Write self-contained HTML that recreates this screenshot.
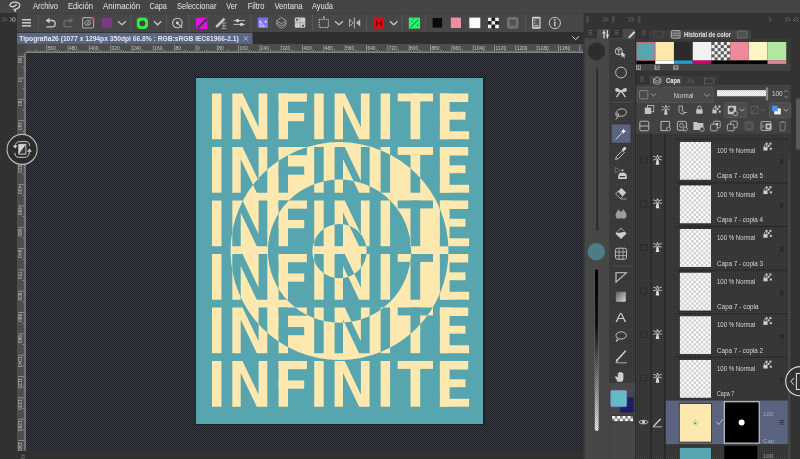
<!DOCTYPE html><html><head><meta charset="utf-8"><style>html,body{margin:0;padding:0;background:#2f2f2f;overflow:hidden;width:800px;height:459px}svg{display:block;will-change:transform}text{font-family:"Liberation Sans",sans-serif}</style></head><body>
<svg width="800" height="459" viewBox="0 0 800 459">
<defs>
<pattern id="chk" width="2" height="2" patternUnits="userSpaceOnUse"><rect width="2" height="2" fill="#393937"/><rect width="1" height="1" fill="#202229"/><rect x="1" y="1" width="1" height="1" fill="#202229"/></pattern>
<pattern id="dots" width="2" height="2" patternUnits="userSpaceOnUse"><rect width="2" height="2" fill="#343434"/><rect width="1" height="1" fill="#404040"/></pattern>
<pattern id="tchk" width="4.8" height="4.8" patternUnits="userSpaceOnUse"><rect width="4.8" height="4.8" fill="#ffffff"/><rect width="2.4" height="2.4" fill="#cdcdcd"/><rect x="2.4" y="2.4" width="2.4" height="2.4" fill="#cdcdcd"/></pattern>
<pattern id="dots2" width="2" height="2" patternUnits="userSpaceOnUse"><rect width="2" height="2" fill="#373737"/><rect width="1" height="1" fill="#414141"/></pattern>
<pattern id="dots3" width="2" height="2" patternUnits="userSpaceOnUse"><rect width="2" height="2" fill="#2a2a2a"/><rect width="1" height="1" fill="#363636"/></pattern>
</defs>
<rect width="800" height="459" fill="#303030"/>
<rect x="0" y="0" width="800" height="13" fill="#454545"/>
<text x="32.9" y="9.2" font-size="9.2" fill="#e6e6e6" textLength="25.1" lengthAdjust="spacingAndGlyphs">Archivo</text>
<text x="68" y="9.2" font-size="9.2" fill="#e6e6e6" textLength="25.0" lengthAdjust="spacingAndGlyphs">Edición</text>
<text x="103" y="9.2" font-size="9.2" fill="#e6e6e6" textLength="37.2" lengthAdjust="spacingAndGlyphs">Animación</text>
<text x="149.4" y="9.2" font-size="9.2" fill="#e6e6e6" textLength="17.4" lengthAdjust="spacingAndGlyphs">Capa</text>
<text x="177" y="9.2" font-size="9.2" fill="#e6e6e6" textLength="39.4" lengthAdjust="spacingAndGlyphs">Seleccionar</text>
<text x="226.3" y="9.2" font-size="9.2" fill="#e6e6e6" textLength="10.9" lengthAdjust="spacingAndGlyphs">Ver</text>
<text x="247.7" y="9.2" font-size="9.2" fill="#e6e6e6" textLength="16.8" lengthAdjust="spacingAndGlyphs">Filtro</text>
<text x="274.4" y="9.2" font-size="9.2" fill="#e6e6e6" textLength="28.0" lengthAdjust="spacingAndGlyphs">Ventana</text>
<text x="312" y="9.2" font-size="9.2" fill="#e6e6e6" textLength="21.0" lengthAdjust="spacingAndGlyphs">Ayuda</text>
<path d="M15.6 11.3 L14 9.5 C17 9.4 20 7.5 19.8 5 C19.6 2.6 16.5 1.8 14 2.2 C11.2 2.6 9.6 4.2 10 5.6 C10.4 7 12.6 7 14.5 6.2 C15.6 5.7 16.6 5 16 4.4" fill="none" stroke="#d2d2d2" stroke-width="1.3" stroke-linecap="round" stroke-linejoin="round"/>
<rect x="0" y="13" width="17" height="446" fill="#313131"/>
<path d="M2.2 17.4 l2 2.1 l-2 2.1 M4.9 17.4 l2 2.1 l-2 2.1" fill="none" stroke="#7a7a7a" stroke-width="0.8"/>
<path d="M10 17.4 l2 2.1 l-2 2.1" fill="none" stroke="#b0b0b0" stroke-width="0.8"/><ellipse cx="13.8" cy="19.5" rx="1.5" ry="2" fill="none" stroke="#b0b0b0" stroke-width="0.8"/>
<rect x="17" y="13" width="567" height="19.2" fill="#474747"/>
<line x1="0" y1="13.6" x2="800" y2="13.6" stroke="#353535" stroke-width="0.9" stroke-dasharray="1 1.4"/>
<g fill="none" stroke="#d6d6d6" stroke-width="1.4"><line x1="22" y1="19.75" x2="31" y2="19.75"/><line x1="22" y1="22.8" x2="31" y2="22.8"/><line x1="22" y1="25.85" x2="31" y2="25.85"/></g>
<line x1="38.3" y1="14.7" x2="38.3" y2="30.8" stroke="#565a62" stroke-width="0.9"/>
<line x1="130.9" y1="14.7" x2="130.9" y2="30.8" stroke="#565a62" stroke-width="0.9"/>
<line x1="166.5" y1="14.7" x2="166.5" y2="30.8" stroke="#565a62" stroke-width="0.9"/>
<line x1="188.8" y1="14.7" x2="188.8" y2="30.8" stroke="#565a62" stroke-width="0.9"/>
<line x1="250.7" y1="14.7" x2="250.7" y2="30.8" stroke="#565a62" stroke-width="0.9"/>
<line x1="312.7" y1="14.7" x2="312.7" y2="30.8" stroke="#565a62" stroke-width="0.9"/>
<line x1="366.5" y1="14.7" x2="366.5" y2="30.8" stroke="#565a62" stroke-width="0.9"/>
<line x1="402.2" y1="14.7" x2="402.2" y2="30.8" stroke="#565a62" stroke-width="0.9"/>
<line x1="425.4" y1="14.7" x2="425.4" y2="30.8" stroke="#565a62" stroke-width="0.9"/>
<line x1="525.6" y1="14.7" x2="525.6" y2="30.8" stroke="#565a62" stroke-width="0.9"/>
<path d="M48.5 20.5 H52 A3.2 3.2 0 0 1 52 26.9 H46.5" fill="none" stroke="#cacaca" stroke-width="1.3"/><polygon points="45.5,20.5 49.5,17.8 49.5,23.2" fill="#cacaca"/>
<path d="M70.5 20.5 H67 A3.2 3.2 0 0 0 67 26.9 H72.5" fill="none" stroke="#6e6e6e" stroke-width="1.3"/><polygon points="73.5,20.5 69.5,17.8 69.5,23.2" fill="#6e6e6e"/>
<rect x="82.6" y="17.6" width="11" height="10.4" rx="1.2" fill="none" stroke="#a8a8a8" stroke-width="1.1"/>
<path d="M90.8 20.8 C87.5 19.8 84.5 21.5 84.8 23.6 C85.1 25.6 89.5 25.7 90.6 23.8 C91.3 22.5 89.6 21.8 88.2 22.4 C87 22.9 87.3 24 88.6 24" fill="none" stroke="#bdbdbd" stroke-width="0.9"/>
<circle cx="92.6" cy="18.6" r="1.8" fill="#e8356a"/>
<rect x="101.8" y="17.7" width="10.4" height="10.2" fill="#7b3b82"/>
<polyline points="118,21.2 121.95,24.8 125.9,21.2" fill="none" stroke="#c8c8c8" stroke-width="1.2"/>
<rect x="136.8" y="17.6" width="11.2" height="11.4" fill="#33e84a"/><circle cx="142.4" cy="23.3" r="2.9" fill="#4a3a4a"/><path d="M136.8 17.6 l2.4 0 l-2.4 2.4z M148 17.6 l-2.4 0 l2.4 2.4z M136.8 29 l2.4 0 l-2.4 -2.4z M148 29 l-2.4 0 l2.4 -2.4z" fill="#3a4a3a"/>
<polyline points="154,21.2 157.65,24.8 161.3,21.2" fill="none" stroke="#c8c8c8" stroke-width="1.2"/>
<circle cx="177.4" cy="23" r="4.8" fill="none" stroke="#c4c4c4" stroke-width="1.1"/><rect x="176" y="21.6" width="2.6" height="2.6" fill="#d0d0d0"/><line x1="178" y1="23.6" x2="182.4" y2="27.8" stroke="#c4c4c4" stroke-width="1.1"/>
<rect x="196.1" y="17.8" width="11.2" height="11.2" fill="#e012e0"/><line x1="197.4" y1="28.4" x2="206.8" y2="19" stroke="#3a3a3a" stroke-width="2"/>
<path d="M215.6 27.6 L216 25.5 L223.6 17.8 L225.4 19.6 L217.8 27.3 Z" fill="#c8c8c8"/><path d="M221.5 23 h5 M221.5 25.8 h5 M221.5 28.6 h5 M223.8 22.8 v6" stroke="#b0b0b0" stroke-width="0.8" fill="none"/>
<g stroke="#c8c8c8" stroke-width="0.9"><line x1="233.5" y1="20.6" x2="245" y2="20.6"/><line x1="233.5" y1="24.4" x2="245" y2="24.4"/></g><circle cx="237.6" cy="20.6" r="1.6" fill="#d8d8d8"/><circle cx="241.6" cy="24.4" r="1.6" fill="#d8d8d8"/>
<rect x="257.8" y="17.6" width="10.2" height="10.5" rx="1" fill="#7a6ff0"/><path d="M260 20 v6.2 l5.5 0" fill="none" stroke="#d8e0ff" stroke-width="0.9"/><path d="M260.5 21 l3 4.8" stroke="#d8e0ff" stroke-width="0.9"/><circle cx="265.6" cy="21.8" r="1" fill="#e8e8ff"/>
<g fill="none" stroke="#a6a6a6" stroke-width="0.9"><path d="M276.8 20.6 L281.4 17.4 L286 20.6 L281.4 23.8 Z"/><path d="M276.8 22.9 L281.4 26.1 L286 22.9"/><path d="M276.8 25.2 L281.4 28.4 L286 25.2"/><path d="M276.8 20.6 v4.6 M286 20.6 v4.6"/></g>
<rect x="294.8" y="17.6" width="10.5" height="10.2" rx="1.2" fill="#cdcdcd"/><circle cx="297" cy="19.8" r="1" fill="#333"/><circle cx="303" cy="25.8" r="1" fill="#333"/><path d="M295 22.7 h10 M300 18 v10" stroke="#8a8a8a" stroke-width="0.6"/>
<rect x="319.2" y="19.4" width="9.2" height="8" fill="none" stroke="#cfcfcf" stroke-width="1" stroke-dasharray="1.3 0.9"/><rect x="323" y="16.6" width="1.6" height="1.6" fill="#cfcfcf"/>
<polyline points="335,21.2 339.0,24.8 343,21.2" fill="none" stroke="#c8c8c8" stroke-width="1.2"/>
<polygon points="349.5,19.2 353.3,22.8 349.5,26.4" fill="none" stroke="#bdbdbd" stroke-width="0.9"/><line x1="354.4" y1="17.4" x2="354.4" y2="28.4" stroke="#bdbdbd" stroke-width="0.9"/><polygon points="360.2,19.2 356,22.8 360.2,26.4" fill="#bdbdbd"/>
<rect x="373.8" y="17.8" width="10.2" height="10.9" fill="#dc0a16"/><path d="M376.6 20.6 v5.4 M381.2 20.6 v5.4 M376.6 23.3 h4.6" stroke="#6a0000" stroke-width="1.1"/>
<polyline points="390,21.2 393.75,24.8 397.5,21.2" fill="none" stroke="#c8c8c8" stroke-width="1.2"/>
<rect x="408.8" y="17.6" width="11.2" height="11" fill="#2ef070"/><line x1="410.5" y1="27.3" x2="418.5" y2="19.5" stroke="#1a5a2a" stroke-width="0.9"/><circle cx="412" cy="21.5" r="0.6" fill="#1a4a1a"/><circle cx="417.6" cy="25.2" r="0.6" fill="#1a4a1a"/><circle cx="413.5" cy="19" r="0.6" fill="#1a4a1a"/>
<rect x="432.2" y="17.6" width="10.3" height="10.5" rx="1" fill="#0a0a0a" stroke="#555" stroke-width="0.6"/>
<rect x="450.8" y="17.6" width="10.2" height="10.5" rx="0.6" fill="#ec8ea0"/>
<circle cx="453" cy="20" r="0.45" fill="#f5e08a"/><circle cx="458" cy="19.5" r="0.45" fill="#f5e08a"/><circle cx="455.6" cy="23" r="0.45" fill="#f5e08a"/><circle cx="453.5" cy="26" r="0.45" fill="#f5e08a"/><circle cx="459" cy="25.5" r="0.45" fill="#f5e08a"/>
<rect x="469.3" y="17.6" width="11" height="10.5" fill="#fafafa"/>
<g><rect x="488.00" y="17.70" width="3.6" height="3.5" fill="#f0f0f0"/><rect x="491.60" y="17.70" width="3.6" height="3.5" fill="#1e1e1e"/><rect x="495.20" y="17.70" width="3.6" height="3.5" fill="#f0f0f0"/><rect x="488.00" y="21.20" width="3.6" height="3.5" fill="#1e1e1e"/><rect x="491.60" y="21.20" width="3.6" height="3.5" fill="#f0f0f0"/><rect x="495.20" y="21.20" width="3.6" height="3.5" fill="#1e1e1e"/><rect x="488.00" y="24.70" width="3.6" height="3.5" fill="#f0f0f0"/><rect x="491.60" y="24.70" width="3.6" height="3.5" fill="#1e1e1e"/><rect x="495.20" y="24.70" width="3.6" height="3.5" fill="#f0f0f0"/></g>
<rect x="507.8" y="17.8" width="10" height="10.2" rx="1.2" fill="#6a6a6a" stroke="#8c8c8c" stroke-width="0.8"/><rect x="510" y="20" width="5.6" height="5.2" fill="#505050"/>
<rect x="532" y="16.8" width="8.6" height="12" rx="1.2" fill="#d0d0d0"/><rect x="533.2" y="18.6" width="6.2" height="8.2" fill="#5a5a5a"/><path d="M534 20.5 h1.5 M534 23 h1.5 M534 25.5 h4.5" stroke="#d0d0d0" stroke-width="0.8"/>
<circle cx="554.8" cy="23" r="5.6" fill="none" stroke="#c6c6c6" stroke-width="1"/><circle cx="554.8" cy="19.8" r="0.9" fill="#d0d0d0"/><rect x="554.1" y="21.6" width="1.4" height="4.6" fill="#d0d0d0"/>
<rect x="17" y="32.2" width="567" height="11.8" fill="#2f2f2f"/>
<rect x="17" y="32.9" width="235.5" height="11" fill="#5b6686"/>
<text x="19.2" y="40.6" font-size="7.7" font-weight="bold" fill="#e6e8ef" textLength="219.5" lengthAdjust="spacingAndGlyphs">Tipografia26 (1077 x 1294px 350dpi 66.8% : RGB:sRGB IEC61966-2.1)</text>
<path d="M243.8 36.6 L247.8 40.6 M247.8 36.6 L243.8 40.6" stroke="#c0c4d0" stroke-width="0.9"/>
<polyline points="572.2,36.4 575.7,39.6 579.2,36.4" fill="none" stroke="#d8d8d8" stroke-width="1"/>
<rect x="17" y="44" width="567" height="9" fill="#4d4d4d"/>
<rect x="17" y="53" width="8.5" height="398" fill="#4d4d4d"/>
<rect x="17" y="44" width="8.5" height="9" fill="#474747"/>
<text x="47.66" y="49.9" font-size="5.2" fill="#c4c4c4" textLength="8.1" lengthAdjust="spacingAndGlyphs">560</text>
<text x="68.98" y="49.9" font-size="5.2" fill="#c4c4c4" textLength="8.1" lengthAdjust="spacingAndGlyphs">480</text>
<text x="90.30" y="49.9" font-size="5.2" fill="#c4c4c4" textLength="8.1" lengthAdjust="spacingAndGlyphs">400</text>
<text x="111.62" y="49.9" font-size="5.2" fill="#c4c4c4" textLength="8.1" lengthAdjust="spacingAndGlyphs">320</text>
<text x="132.94" y="49.9" font-size="5.2" fill="#c4c4c4" textLength="8.1" lengthAdjust="spacingAndGlyphs">240</text>
<text x="154.26" y="49.9" font-size="5.2" fill="#c4c4c4" textLength="8.1" lengthAdjust="spacingAndGlyphs">160</text>
<text x="175.58" y="49.9" font-size="5.2" fill="#c4c4c4" textLength="5.4" lengthAdjust="spacingAndGlyphs">80</text>
<text x="196.90" y="49.9" font-size="5.2" fill="#c4c4c4" textLength="2.7" lengthAdjust="spacingAndGlyphs">0</text>
<text x="218.22" y="49.9" font-size="5.2" fill="#c4c4c4" textLength="5.4" lengthAdjust="spacingAndGlyphs">80</text>
<text x="239.54" y="49.9" font-size="5.2" fill="#c4c4c4" textLength="8.1" lengthAdjust="spacingAndGlyphs">160</text>
<text x="260.86" y="49.9" font-size="5.2" fill="#c4c4c4" textLength="8.1" lengthAdjust="spacingAndGlyphs">240</text>
<text x="282.18" y="49.9" font-size="5.2" fill="#c4c4c4" textLength="8.1" lengthAdjust="spacingAndGlyphs">320</text>
<text x="303.50" y="49.9" font-size="5.2" fill="#c4c4c4" textLength="8.1" lengthAdjust="spacingAndGlyphs">400</text>
<text x="324.82" y="49.9" font-size="5.2" fill="#c4c4c4" textLength="8.1" lengthAdjust="spacingAndGlyphs">480</text>
<text x="346.14" y="49.9" font-size="5.2" fill="#c4c4c4" textLength="8.1" lengthAdjust="spacingAndGlyphs">560</text>
<text x="367.46" y="49.9" font-size="5.2" fill="#c4c4c4" textLength="8.1" lengthAdjust="spacingAndGlyphs">640</text>
<text x="388.78" y="49.9" font-size="5.2" fill="#c4c4c4" textLength="8.1" lengthAdjust="spacingAndGlyphs">720</text>
<text x="410.10" y="49.9" font-size="5.2" fill="#c4c4c4" textLength="8.1" lengthAdjust="spacingAndGlyphs">800</text>
<text x="431.42" y="49.9" font-size="5.2" fill="#c4c4c4" textLength="8.1" lengthAdjust="spacingAndGlyphs">880</text>
<text x="452.74" y="49.9" font-size="5.2" fill="#c4c4c4" textLength="8.1" lengthAdjust="spacingAndGlyphs">960</text>
<text x="474.06" y="49.9" font-size="5.2" fill="#c4c4c4" textLength="10.8" lengthAdjust="spacingAndGlyphs">1040</text>
<text x="495.38" y="49.9" font-size="5.2" fill="#c4c4c4" textLength="10.8" lengthAdjust="spacingAndGlyphs">1120</text>
<text x="516.70" y="49.9" font-size="5.2" fill="#c4c4c4" textLength="10.8" lengthAdjust="spacingAndGlyphs">1200</text>
<text x="538.02" y="49.9" font-size="5.2" fill="#c4c4c4" textLength="10.8" lengthAdjust="spacingAndGlyphs">1280</text>
<text x="559.34" y="49.9" font-size="5.2" fill="#c4c4c4" textLength="10.8" lengthAdjust="spacingAndGlyphs">1360</text>
<path d="M27.57 50.8V52 M29.70 50.8V52 M31.84 50.8V52 M33.97 50.8V52 M36.10 49.6V52 M38.23 50.8V52 M40.36 50.8V52 M42.50 50.8V52 M44.63 50.8V52 M46.76 45.2V52 M48.89 50.8V52 M51.02 50.8V52 M53.16 50.8V52 M55.29 50.8V52 M57.42 49.6V52 M59.55 50.8V52 M61.68 50.8V52 M63.82 50.8V52 M65.95 50.8V52 M68.08 45.2V52 M70.21 50.8V52 M72.34 50.8V52 M74.48 50.8V52 M76.61 50.8V52 M78.74 49.6V52 M80.87 50.8V52 M83.00 50.8V52 M85.14 50.8V52 M87.27 50.8V52 M89.40 45.2V52 M91.53 50.8V52 M93.66 50.8V52 M95.80 50.8V52 M97.93 50.8V52 M100.06 49.6V52 M102.19 50.8V52 M104.32 50.8V52 M106.46 50.8V52 M108.59 50.8V52 M110.72 45.2V52 M112.85 50.8V52 M114.98 50.8V52 M117.12 50.8V52 M119.25 50.8V52 M121.38 49.6V52 M123.51 50.8V52 M125.64 50.8V52 M127.78 50.8V52 M129.91 50.8V52 M132.04 45.2V52 M134.17 50.8V52 M136.30 50.8V52 M138.44 50.8V52 M140.57 50.8V52 M142.70 49.6V52 M144.83 50.8V52 M146.96 50.8V52 M149.10 50.8V52 M151.23 50.8V52 M153.36 45.2V52 M155.49 50.8V52 M157.62 50.8V52 M159.76 50.8V52 M161.89 50.8V52 M164.02 49.6V52 M166.15 50.8V52 M168.28 50.8V52 M170.42 50.8V52 M172.55 50.8V52 M174.68 45.2V52 M176.81 50.8V52 M178.94 50.8V52 M181.08 50.8V52 M183.21 50.8V52 M185.34 49.6V52 M187.47 50.8V52 M189.60 50.8V52 M191.74 50.8V52 M193.87 50.8V52 M196.00 45.2V52 M198.13 50.8V52 M200.26 50.8V52 M202.40 50.8V52 M204.53 50.8V52 M206.66 49.6V52 M208.79 50.8V52 M210.92 50.8V52 M213.06 50.8V52 M215.19 50.8V52 M217.32 45.2V52 M219.45 50.8V52 M221.58 50.8V52 M223.72 50.8V52 M225.85 50.8V52 M227.98 49.6V52 M230.11 50.8V52 M232.24 50.8V52 M234.38 50.8V52 M236.51 50.8V52 M238.64 45.2V52 M240.77 50.8V52 M242.90 50.8V52 M245.04 50.8V52 M247.17 50.8V52 M249.30 49.6V52 M251.43 50.8V52 M253.56 50.8V52 M255.70 50.8V52 M257.83 50.8V52 M259.96 45.2V52 M262.09 50.8V52 M264.22 50.8V52 M266.36 50.8V52 M268.49 50.8V52 M270.62 49.6V52 M272.75 50.8V52 M274.88 50.8V52 M277.02 50.8V52 M279.15 50.8V52 M281.28 45.2V52 M283.41 50.8V52 M285.54 50.8V52 M287.68 50.8V52 M289.81 50.8V52 M291.94 49.6V52 M294.07 50.8V52 M296.20 50.8V52 M298.34 50.8V52 M300.47 50.8V52 M302.60 45.2V52 M304.73 50.8V52 M306.86 50.8V52 M309.00 50.8V52 M311.13 50.8V52 M313.26 49.6V52 M315.39 50.8V52 M317.52 50.8V52 M319.66 50.8V52 M321.79 50.8V52 M323.92 45.2V52 M326.05 50.8V52 M328.18 50.8V52 M330.32 50.8V52 M332.45 50.8V52 M334.58 49.6V52 M336.71 50.8V52 M338.84 50.8V52 M340.98 50.8V52 M343.11 50.8V52 M345.24 45.2V52 M347.37 50.8V52 M349.50 50.8V52 M351.64 50.8V52 M353.77 50.8V52 M355.90 49.6V52 M358.03 50.8V52 M360.16 50.8V52 M362.30 50.8V52 M364.43 50.8V52 M366.56 45.2V52 M368.69 50.8V52 M370.82 50.8V52 M372.96 50.8V52 M375.09 50.8V52 M377.22 49.6V52 M379.35 50.8V52 M381.48 50.8V52 M383.62 50.8V52 M385.75 50.8V52 M387.88 45.2V52 M390.01 50.8V52 M392.14 50.8V52 M394.28 50.8V52 M396.41 50.8V52 M398.54 49.6V52 M400.67 50.8V52 M402.80 50.8V52 M404.94 50.8V52 M407.07 50.8V52 M409.20 45.2V52 M411.33 50.8V52 M413.46 50.8V52 M415.60 50.8V52 M417.73 50.8V52 M419.86 49.6V52 M421.99 50.8V52 M424.12 50.8V52 M426.26 50.8V52 M428.39 50.8V52 M430.52 45.2V52 M432.65 50.8V52 M434.78 50.8V52 M436.92 50.8V52 M439.05 50.8V52 M441.18 49.6V52 M443.31 50.8V52 M445.44 50.8V52 M447.58 50.8V52 M449.71 50.8V52 M451.84 45.2V52 M453.97 50.8V52 M456.10 50.8V52 M458.24 50.8V52 M460.37 50.8V52 M462.50 49.6V52 M464.63 50.8V52 M466.76 50.8V52 M468.90 50.8V52 M471.03 50.8V52 M473.16 45.2V52 M475.29 50.8V52 M477.42 50.8V52 M479.56 50.8V52 M481.69 50.8V52 M483.82 49.6V52 M485.95 50.8V52 M488.08 50.8V52 M490.22 50.8V52 M492.35 50.8V52 M494.48 45.2V52 M496.61 50.8V52 M498.74 50.8V52 M500.88 50.8V52 M503.01 50.8V52 M505.14 49.6V52 M507.27 50.8V52 M509.40 50.8V52 M511.54 50.8V52 M513.67 50.8V52 M515.80 45.2V52 M517.93 50.8V52 M520.06 50.8V52 M522.20 50.8V52 M524.33 50.8V52 M526.46 49.6V52 M528.59 50.8V52 M530.72 50.8V52 M532.86 50.8V52 M534.99 50.8V52 M537.12 45.2V52 M539.25 50.8V52 M541.38 50.8V52 M543.52 50.8V52 M545.65 50.8V52 M547.78 49.6V52 M549.91 50.8V52 M552.04 50.8V52 M554.18 50.8V52 M556.31 50.8V52 M558.44 45.2V52 M560.57 50.8V52 M562.70 50.8V52 M564.84 50.8V52 M566.97 50.8V52 M569.10 49.6V52 M571.23 50.8V52 M573.36 50.8V52 M575.50 50.8V52 M577.63 50.8V52 M579.76 45.2V52 M581.89 50.8V52" stroke="#bdbdbd" stroke-width="0.6" fill="none"/>
<line x1="25.5" y1="52.4" x2="583.5" y2="52.4" stroke="#9a9a9a" stroke-width="0.8"/>
<text transform="translate(17.8 57.88) rotate(90)" x="0" y="0" font-size="5.2" fill="#c4c4c4" textLength="5.4" lengthAdjust="spacingAndGlyphs">80</text>
<text transform="translate(17.8 79.20) rotate(90)" x="0" y="0" font-size="5.2" fill="#c4c4c4" textLength="2.7" lengthAdjust="spacingAndGlyphs">0</text>
<text transform="translate(17.8 100.52) rotate(90)" x="0" y="0" font-size="5.2" fill="#c4c4c4" textLength="5.4" lengthAdjust="spacingAndGlyphs">80</text>
<text transform="translate(17.8 121.84) rotate(90)" x="0" y="0" font-size="5.2" fill="#c4c4c4" textLength="8.1" lengthAdjust="spacingAndGlyphs">160</text>
<text transform="translate(17.8 143.16) rotate(90)" x="0" y="0" font-size="5.2" fill="#c4c4c4" textLength="8.1" lengthAdjust="spacingAndGlyphs">240</text>
<text transform="translate(17.8 164.48) rotate(90)" x="0" y="0" font-size="5.2" fill="#c4c4c4" textLength="8.1" lengthAdjust="spacingAndGlyphs">320</text>
<text transform="translate(17.8 185.80) rotate(90)" x="0" y="0" font-size="5.2" fill="#c4c4c4" textLength="8.1" lengthAdjust="spacingAndGlyphs">400</text>
<text transform="translate(17.8 207.12) rotate(90)" x="0" y="0" font-size="5.2" fill="#c4c4c4" textLength="8.1" lengthAdjust="spacingAndGlyphs">480</text>
<text transform="translate(17.8 228.44) rotate(90)" x="0" y="0" font-size="5.2" fill="#c4c4c4" textLength="8.1" lengthAdjust="spacingAndGlyphs">560</text>
<text transform="translate(17.8 249.76) rotate(90)" x="0" y="0" font-size="5.2" fill="#c4c4c4" textLength="8.1" lengthAdjust="spacingAndGlyphs">640</text>
<text transform="translate(17.8 271.08) rotate(90)" x="0" y="0" font-size="5.2" fill="#c4c4c4" textLength="8.1" lengthAdjust="spacingAndGlyphs">720</text>
<text transform="translate(17.8 292.40) rotate(90)" x="0" y="0" font-size="5.2" fill="#c4c4c4" textLength="8.1" lengthAdjust="spacingAndGlyphs">800</text>
<text transform="translate(17.8 313.72) rotate(90)" x="0" y="0" font-size="5.2" fill="#c4c4c4" textLength="8.1" lengthAdjust="spacingAndGlyphs">880</text>
<text transform="translate(17.8 335.04) rotate(90)" x="0" y="0" font-size="5.2" fill="#c4c4c4" textLength="8.1" lengthAdjust="spacingAndGlyphs">960</text>
<text transform="translate(17.8 356.36) rotate(90)" x="0" y="0" font-size="5.2" fill="#c4c4c4" textLength="10.8" lengthAdjust="spacingAndGlyphs">1040</text>
<text transform="translate(17.8 377.68) rotate(90)" x="0" y="0" font-size="5.2" fill="#c4c4c4" textLength="10.8" lengthAdjust="spacingAndGlyphs">1120</text>
<text transform="translate(17.8 399.00) rotate(90)" x="0" y="0" font-size="5.2" fill="#c4c4c4" textLength="10.8" lengthAdjust="spacingAndGlyphs">1200</text>
<text transform="translate(17.8 420.32) rotate(90)" x="0" y="0" font-size="5.2" fill="#c4c4c4" textLength="10.8" lengthAdjust="spacingAndGlyphs">1280</text>
<text transform="translate(17.8 441.64) rotate(90)" x="0" y="0" font-size="5.2" fill="#c4c4c4" textLength="10.8" lengthAdjust="spacingAndGlyphs">1360</text>
<path d="M23.8 54.55H25 M18.2 56.68H25 M23.8 58.81H25 M23.8 60.94H25 M23.8 63.08H25 M23.8 65.21H25 M22.6 67.34H25 M23.8 69.47H25 M23.8 71.60H25 M23.8 73.74H25 M23.8 75.87H25 M18.2 78.00H25 M23.8 80.13H25 M23.8 82.26H25 M23.8 84.40H25 M23.8 86.53H25 M22.6 88.66H25 M23.8 90.79H25 M23.8 92.92H25 M23.8 95.06H25 M23.8 97.19H25 M18.2 99.32H25 M23.8 101.45H25 M23.8 103.58H25 M23.8 105.72H25 M23.8 107.85H25 M22.6 109.98H25 M23.8 112.11H25 M23.8 114.24H25 M23.8 116.38H25 M23.8 118.51H25 M18.2 120.64H25 M23.8 122.77H25 M23.8 124.90H25 M23.8 127.04H25 M23.8 129.17H25 M22.6 131.30H25 M23.8 133.43H25 M23.8 135.56H25 M23.8 137.70H25 M23.8 139.83H25 M18.2 141.96H25 M23.8 144.09H25 M23.8 146.22H25 M23.8 148.36H25 M23.8 150.49H25 M22.6 152.62H25 M23.8 154.75H25 M23.8 156.88H25 M23.8 159.02H25 M23.8 161.15H25 M18.2 163.28H25 M23.8 165.41H25 M23.8 167.54H25 M23.8 169.68H25 M23.8 171.81H25 M22.6 173.94H25 M23.8 176.07H25 M23.8 178.20H25 M23.8 180.34H25 M23.8 182.47H25 M18.2 184.60H25 M23.8 186.73H25 M23.8 188.86H25 M23.8 191.00H25 M23.8 193.13H25 M22.6 195.26H25 M23.8 197.39H25 M23.8 199.52H25 M23.8 201.66H25 M23.8 203.79H25 M18.2 205.92H25 M23.8 208.05H25 M23.8 210.18H25 M23.8 212.32H25 M23.8 214.45H25 M22.6 216.58H25 M23.8 218.71H25 M23.8 220.84H25 M23.8 222.98H25 M23.8 225.11H25 M18.2 227.24H25 M23.8 229.37H25 M23.8 231.50H25 M23.8 233.64H25 M23.8 235.77H25 M22.6 237.90H25 M23.8 240.03H25 M23.8 242.16H25 M23.8 244.30H25 M23.8 246.43H25 M18.2 248.56H25 M23.8 250.69H25 M23.8 252.82H25 M23.8 254.96H25 M23.8 257.09H25 M22.6 259.22H25 M23.8 261.35H25 M23.8 263.48H25 M23.8 265.62H25 M23.8 267.75H25 M18.2 269.88H25 M23.8 272.01H25 M23.8 274.14H25 M23.8 276.28H25 M23.8 278.41H25 M22.6 280.54H25 M23.8 282.67H25 M23.8 284.80H25 M23.8 286.94H25 M23.8 289.07H25 M18.2 291.20H25 M23.8 293.33H25 M23.8 295.46H25 M23.8 297.60H25 M23.8 299.73H25 M22.6 301.86H25 M23.8 303.99H25 M23.8 306.12H25 M23.8 308.26H25 M23.8 310.39H25 M18.2 312.52H25 M23.8 314.65H25 M23.8 316.78H25 M23.8 318.92H25 M23.8 321.05H25 M22.6 323.18H25 M23.8 325.31H25 M23.8 327.44H25 M23.8 329.58H25 M23.8 331.71H25 M18.2 333.84H25 M23.8 335.97H25 M23.8 338.10H25 M23.8 340.24H25 M23.8 342.37H25 M22.6 344.50H25 M23.8 346.63H25 M23.8 348.76H25 M23.8 350.90H25 M23.8 353.03H25 M18.2 355.16H25 M23.8 357.29H25 M23.8 359.42H25 M23.8 361.56H25 M23.8 363.69H25 M22.6 365.82H25 M23.8 367.95H25 M23.8 370.08H25 M23.8 372.22H25 M23.8 374.35H25 M18.2 376.48H25 M23.8 378.61H25 M23.8 380.74H25 M23.8 382.88H25 M23.8 385.01H25 M22.6 387.14H25 M23.8 389.27H25 M23.8 391.40H25 M23.8 393.54H25 M23.8 395.67H25 M18.2 397.80H25 M23.8 399.93H25 M23.8 402.06H25 M23.8 404.20H25 M23.8 406.33H25 M22.6 408.46H25 M23.8 410.59H25 M23.8 412.72H25 M23.8 414.86H25 M23.8 416.99H25 M18.2 419.12H25 M23.8 421.25H25 M23.8 423.38H25 M23.8 425.52H25 M23.8 427.65H25 M22.6 429.78H25 M23.8 431.91H25 M23.8 434.04H25 M23.8 436.18H25 M23.8 438.31H25 M18.2 440.44H25 M23.8 442.57H25 M23.8 444.70H25 M23.8 446.84H25 M23.8 448.97H25" stroke="#bdbdbd" stroke-width="0.6" fill="none"/>
<line x1="25.2" y1="53" x2="25.2" y2="451" stroke="#9a9a9a" stroke-width="0.8"/>
<rect x="26" y="53" width="558" height="398" fill="url(#chk)"/>
<rect x="17" y="451" width="567" height="8" fill="#303030"/>
<circle cx="22.1" cy="149.4" r="15" fill="#2c2c2c" stroke="#bdbdbd" stroke-width="1.1"/>
<rect x="18.8" y="144.3" width="7.1" height="9.8" fill="#3a3a3a" stroke="#d0d0d0" stroke-width="0.9"/><path d="M18.8 144.3 H25.9 L18.8 154.1 Z" fill="#d6d6d6"/>
<path d="M15.1 146.8 C15.1 143.5 16.8 141.6 19.6 141.6 H26 C28.2 141.6 29.6 143.2 29.6 146" fill="none" stroke="#c8c8c8" stroke-width="1"/><polygon points="12.7,145.4 17.6,145.4 15.1,148.6" fill="#d0d0d0"/>
<path d="M29.4 151.8 C29.4 155.3 27.6 157.3 24.8 157.3 H18.4 C16.2 157.3 14.9 155.6 14.9 152.8" fill="none" stroke="#c8c8c8" stroke-width="1"/><polygon points="26.9,151.8 31.9,151.8 29.4,148.4" fill="#d0d0d0"/>
<path d="M21 456.6 l2 -2 l2 2 M21 459.4 l2 -2 l2 2" fill="none" stroke="#8a8a8a" stroke-width="0.8"/>
<rect x="195" y="77" width="290" height="348" fill="#1c1c1c" opacity="0.6"/>
<svg x="196" y="78" width="287" height="345.5" overflow="hidden">
<defs>
<g id="row" transform="translate(-196,0)"><rect x="212.0" y="0" width="9.5" height="45.7"/><polygon points="232.30,45.70 232.30,0.00 242.50,0.00 258.60,33.70 258.60,0.00 267.30,0.00 267.30,45.70 256.80,45.70 240.70,12.00 240.70,45.70"/><rect x="278.6" y="0" width="9.4" height="45.7"/><rect x="278.6" y="0" width="28.3" height="8.2"/><rect x="278.6" y="19.5" width="25.6" height="8.2"/><rect x="314.2" y="0" width="9.5" height="45.7"/><polygon points="334.60,45.70 334.60,0.00 344.80,0.00 360.90,33.70 360.90,0.00 369.60,0.00 369.60,45.70 359.10,45.70 343.00,12.00 343.00,45.70"/><rect x="380.6" y="0" width="9.5" height="45.7"/><rect x="397.7" y="0" width="35.3" height="7.9"/><rect x="410.5" y="0" width="9.7" height="45.7"/><rect x="439.9" y="0" width="9.7" height="45.7"/><rect x="439.9" y="0" width="28.3" height="8.5"/><rect x="439.9" y="18.3" width="25.6" height="7.9"/><rect x="439.9" y="37.800000000000004" width="29.2" height="7.9"/></g>
<mask id="xm" maskUnits="userSpaceOnUse" x="0" y="0" width="287" height="346">
<circle cx="143.5" cy="173.1" r="109" fill="#fff"/><circle cx="143.5" cy="173.1" r="71.6" fill="#000"/><circle cx="143.5" cy="173.1" r="27.2" fill="#fff"/>
</mask>
</defs>
<rect width="287" height="346" fill="#56a5af"/>
<g fill="#fde9b0"><use href="#row" y="15.50" fill="#fde9b0"/><use href="#row" y="69.00" fill="#fde9b0"/><use href="#row" y="122.50" fill="#fde9b0"/><use href="#row" y="176.00" fill="#fde9b0"/><use href="#row" y="229.50" fill="#fde9b0"/><use href="#row" y="283.00" fill="#fde9b0"/></g>
<g mask="url(#xm)"><rect width="287" height="346" fill="#fde9b0"/><g fill="#56a5af"><use href="#row" y="15.50" fill="#56a5af"/><use href="#row" y="69.00" fill="#56a5af"/><use href="#row" y="122.50" fill="#56a5af"/><use href="#row" y="176.00" fill="#56a5af"/><use href="#row" y="229.50" fill="#56a5af"/><use href="#row" y="283.00" fill="#56a5af"/></g></g>
</svg>
<rect x="583.5" y="13.3" width="216.5" height="446" fill="#333333"/>
<rect x="586.1" y="16" width="2.7" height="7" rx="0.8" fill="#4a4a4a"/>
<rect x="612" y="16" width="2.7" height="7" rx="0.8" fill="#4a4a4a"/>
<rect x="637.8" y="16" width="2.7" height="7" rx="0.8" fill="#4a4a4a"/>
<path d="M602.8 17.3 l2 2.2 l-2 2.2 M605.8 17.3 l2 2.2 l-2 2.2" fill="none" stroke="#7a7a7a" stroke-width="0.8"/>
<path d="M628.7 17.3 l2 2.2 l-2 2.2 M631.7 17.3 l2 2.2 l-2 2.2" fill="none" stroke="#7a7a7a" stroke-width="0.8"/>
<rect x="584" y="38.2" width="25.5" height="421" fill="#474747"/><rect x="583.5" y="38.2" width="1.6" height="421" fill="#3c3c3c"/>
<rect x="597" y="29" width="12.7" height="9.5" fill="#4a4a4a"/>
<path d="M588.3 30.5h4 M588.3 32.4h4 M588.3 34.3h4" stroke="#7c7c7c" stroke-width="0.55"/>
<g fill="#d4d4d4"><rect x="603.4" y="30" width="1.2" height="8.5"/><rect x="606.8" y="30" width="1.2" height="8.5"/><rect x="602.6" y="32" width="2.8" height="1.8" rx="0.5"/><rect x="606" y="34.5" width="2.8" height="1.8" rx="0.5"/></g>
<circle cx="596.5" cy="51.4" r="8.8" fill="url(#dots3)"/>
<rect x="596.2" y="68.6" width="2.1" height="162.2" fill="#2c2c2c"/>
<circle cx="596.3" cy="251.7" r="8.7" fill="#4b7e84"/>
<defs><linearGradient id="opg" x1="0" y1="0" x2="0" y2="1"><stop offset="0" stop-color="#000"/><stop offset="0.35" stop-color="#111"/><stop offset="1" stop-color="#000" stop-opacity="0"/></linearGradient><pattern id="smchk" width="2" height="2" patternUnits="userSpaceOnUse"><rect width="2" height="2" fill="#fff"/><rect width="1" height="1" fill="#bbb"/><rect x="1" y="1" width="1" height="1" fill="#bbb"/></pattern></defs>
<rect x="594.8" y="269" width="3.8" height="162" rx="1.9" fill="url(#smchk)"/><rect x="594.8" y="269" width="3.8" height="162" rx="1.9" fill="url(#opg)"/>
<rect x="609.5" y="38.2" width="25.5" height="421" fill="url(#dots2)"/>
<rect x="609.5" y="383" width="25.5" height="76" fill="#474747"/>
<rect x="622.9" y="29" width="12.2" height="9.5" fill="#4a4a4a"/><rect x="609.5" y="38.2" width="25.5" height="1.2" fill="#4a4a4a"/>
<path d="M614.6 30.5h4 M614.6 32.4h4 M614.6 34.3h4" stroke="#7c7c7c" stroke-width="0.55"/>
<path d="M628.2 38.6 L628.8 36.4 L634 31 L635.4 32.4 L630.2 37.8 Z" fill="#d8d8d8"/>
<rect x="635" y="38.2" width="1.2" height="421" fill="#2c2c2c"/>
<rect x="611.8" y="124.4" width="18.7" height="18.3" fill="#5a6480"/>
<line x1="612" y1="102.3" x2="632" y2="102.3" stroke="#555" stroke-width="0.9"/><line x1="612" y1="266" x2="632" y2="266" stroke="#555" stroke-width="0.9"/>
<rect x="619.9" y="397.2" width="14" height="15.5" rx="1" fill="#1c1b6a" stroke="#3a3a3a" stroke-width="0.8"/>
<rect x="610.8" y="390.4" width="15.8" height="16.2" rx="1.2" fill="#5ebec2" stroke="#7b86c8" stroke-width="1"/>
<rect x="611" y="414.4" width="23.3" height="8.6" rx="1.5" fill="#3c3c3c"/>
<g><rect x="612.2" y="416.0" width="2.6" height="2.6" fill="#fff"/><rect x="614.8" y="418.6" width="2.6" height="2.6" fill="#fff"/><rect x="617.4" y="416.0" width="2.6" height="2.6" fill="#fff"/><rect x="620.0" y="418.6" width="2.6" height="2.6" fill="#fff"/><rect x="622.6" y="416.0" width="2.6" height="2.6" fill="#fff"/><rect x="625.2" y="418.6" width="2.6" height="2.6" fill="#fff"/><rect x="627.8" y="416.0" width="2.6" height="2.6" fill="#fff"/><rect x="630.4" y="418.6" width="2.6" height="2.6" fill="#fff"/><rect x="612.2" y="416" width="20.8" height="5.2" fill="#fff" opacity="0.35"/></g>
<path d="M769 17.3 l2 2.2 l-2 2.2 M785.2 17.3 l2 2.2 l-2 2.2 M788 17.3 l2 2.2 l-2 2.2 M795.6 17.3 l-2 2.2 l2 2.2 M798.4 17.3 l-2 2.2 l2 2.2" fill="none" stroke="#7a7a7a" stroke-width="0.8"/>
<circle cx="618.8" cy="51.3" r="3.6" fill="none" stroke="#cdcdcd" stroke-width="0.9"/><path d="M616.6 49.8h4.4 M618.8 49.8v4.5" stroke="#cdcdcd" stroke-width="0.9"/><polygon points="621.2,51.6 626,55.2 623.8,55.5 625,57.6 624,58 622.8,56 621.4,57.2" fill="#cdcdcd"/>
<circle cx="621" cy="72.5" r="5.4" fill="none" stroke="#cdcdcd" stroke-width="0.9"/>
<path d="M621 91 C618.4 87.4 615 87.2 615.2 90 C615.4 92.6 618.4 92.2 621 91 Z M621 91 C623.6 87.4 627 87.2 626.8 90 C626.6 92.6 623.6 92.2 621 91 Z" fill="#cdcdcd"/><path d="M620.2 91.6 L616.6 97.2 M621.8 91.6 L625.4 97.2" stroke="#cdcdcd" stroke-width="1.3"/><circle cx="621" cy="91.2" r="1.2" fill="#cdcdcd"/>
<path d="M617.8 117.5 C614.5 115.5 615.5 110 620.5 109 C625 108.2 627.5 110.8 626 113.8 C624.5 116.6 619.5 117 617.6 115.2 C616.2 114 617.5 112.4 618.4 113.8 C619.2 115.2 617.8 118.6 615.6 119.4" fill="none" stroke="#cdcdcd" stroke-width="0.9"/>
<line x1="615.8" y1="139.4" x2="622.4" y2="132.4" stroke="#d4d8e4" stroke-width="1"/><path d="M623.6 128.2 L624.2 130.6 L626.6 131.2 L624.2 131.8 L623.6 134.2 L623 131.8 L620.6 131.2 L623 130.6 Z" fill="#ffffff"/><circle cx="623.6" cy="131.2" r="1.3" fill="#fff"/>
<path d="M615.6 159.4 L616.4 156.6 L622.4 150.6 L624.4 152.6 L618.4 158.6 Z" fill="none" stroke="#cdcdcd" stroke-width="0.9"/><path d="M621.6 149.6 L624.2 147 C625 146.2 627 148.2 626.2 149 L623.6 151.6 Z" fill="#cdcdcd"/>
<path d="M618.2 179 v-2.8 a4.3 3.8 0 0 1 8.6 0 v2.8 z" fill="#cdcdcd"/><rect x="619.8" y="176" width="5.4" height="1.2" fill="#393939"/><circle cx="622.5" cy="170.2" r="1" fill="#cdcdcd"/><path d="M615.2 167.4 L620.6 170.4 L615.2 173.2 Z" fill="none" stroke="#8a8a8a" stroke-width="0.6"/>
<path d="M615.6 193.8 L621.4 188 L626.2 192.8 L620.4 198.6 Z" fill="#cdcdcd"/><path d="M615.6 193.8 L618 191.4 L622.8 196.2 L620.4 198.6 Z" fill="#393939" stroke="#cdcdcd" stroke-width="0.7"/><line x1="620.5" y1="199" x2="626.5" y2="199" stroke="#cdcdcd" stroke-width="0.7"/>
<path d="M615.6 215.5 C615.6 212.5 618 210.5 618.6 209.2 C619.6 211 621 212 621 212 C621 212 622.6 210.8 623.4 209.2 C624.2 210.5 626.6 212.6 626.6 215.5 C626.6 218.5 624 219.5 621 218 C618 219.5 615.6 218.5 615.6 215.5 Z" fill="#9c9c9c"/>
<path d="M615.4 233.4 L621 227.8 L626.6 233.4 L621 239 Z" fill="#cdcdcd"/><path d="M616.8 232.2 L621 228.8 L625.2 232.2 C622 231 619 234 616.8 232.2 Z" fill="#393939"/>
<rect x="615.4" y="248.2" width="11.2" height="11" rx="2.2" fill="none" stroke="#cdcdcd" stroke-width="0.9"/><path d="M619 248.4v10.8 M623 248.4v10.8 M615.6 252h11 M615.6 255.6h11" stroke="#cdcdcd" stroke-width="0.7"/>
<path d="M616 282.2 L626.4 272.8 L616 272.8 Z" fill="none" stroke="#cdcdcd" stroke-width="1.1"/>
<defs><linearGradient id="gsq" x1="0" y1="0" x2="1" y2="1"><stop offset="0" stop-color="#5a5a5a"/><stop offset="1" stop-color="#d8d8d8"/></linearGradient></defs><rect x="615.8" y="291.8" width="10" height="10" rx="1" fill="url(#gsq)"/>
<text x="615.6" y="322" font-size="13" fill="#cdcdcd" textLength="10.6" lengthAdjust="spacingAndGlyphs">A</text>
<ellipse cx="621.2" cy="335.4" rx="5.2" ry="3.6" fill="none" stroke="#cdcdcd" stroke-width="0.9"/><path d="M617.6 337.6 L616.4 341.4 L619.8 338.6" fill="#393939" stroke="#cdcdcd" stroke-width="0.9"/>
<path d="M617 360.2 L625.8 350.8" stroke="#cdcdcd" stroke-width="1.6"/><path d="M615.6 362.6 L616.4 359 L618.4 361 Z" fill="#cdcdcd"/><line x1="615.6" y1="362.8" x2="627" y2="362.8" stroke="#cdcdcd" stroke-width="0.8"/>
<path d="M617.6 381.8 C616.6 379.4 614.6 377.6 615.2 376.6 C615.8 375.8 617 376.8 617.8 377.6 V373.4 C617.8 372.4 619.2 372.4 619.2 373.4 V372.4 C619.2 371.4 620.6 371.4 620.6 372.4 V372.8 C620.6 371.8 622 371.8 622 372.8 V373.6 C622 372.6 623.4 372.6 623.4 373.6 V378.6 C623.4 380.2 622.6 381.8 621.6 381.8 Z" fill="#cdcdcd"/>
<rect x="636" y="38.9" width="154.8" height="31.8" fill="#3a3a3a"/>
<path d="M641.7 31h4 M641.7 32.9h4 M641.7 34.8h4" stroke="#7c7c7c" stroke-width="0.55"/>
<rect x="649" y="29.8" width="19" height="9.1" fill="#3c3c3c"/>
<rect x="668.5" y="29.8" width="82.5" height="9.1" fill="#444444"/>
<rect x="653.5" y="31.6" width="10" height="5.6" rx="1.5" fill="none" stroke="#4f4f4f" stroke-width="0.8"/>
<rect x="671.4" y="30.6" width="8.6" height="7.6" rx="1" fill="#5a5a5a" stroke="#c8c8c8" stroke-width="0.8"/><path d="M672.4 33.2h6.6 M672.4 35.4h6.6" stroke="#c8c8c8" stroke-width="0.6"/>
<text x="684" y="37" font-size="7.4" font-weight="bold" fill="#e4e4e4" textLength="47" lengthAdjust="spacingAndGlyphs">Historial de color</text>
<rect x="737.3" y="31" width="9.6" height="7" rx="0.8" fill="#505050" stroke="#777" stroke-width="0.7"/>
<rect x="636.60" y="42" width="18.6" height="18.5" fill="#56a5b0"/>
<rect x="636.60" y="60.5" width="18.6" height="3.4" fill="#000"/>
<rect x="655.32" y="42" width="18.6" height="18.5" fill="#fde8ab"/>
<rect x="655.32" y="60.5" width="18.6" height="3.4" fill="#fff"/>
<rect x="674.04" y="42" width="18.6" height="18.5" fill="#2b2b2b"/>
<rect x="674.04" y="60.5" width="18.6" height="3.4" fill="#1f9bd8"/>
<rect x="692.76" y="42" width="18.6" height="18.5" fill="#f1f1f1"/>
<rect x="692.76" y="60.5" width="18.6" height="3.4" fill="#d6006e"/>
<rect x="711.48" y="42" width="18.5" height="18.5" fill="#f2f2f2"/>
<rect x="711.48" y="42.00" width="3.08" height="3.08" fill="#5a5a5a"/>
<rect x="717.64" y="42.00" width="3.08" height="3.08" fill="#5a5a5a"/>
<rect x="723.80" y="42.00" width="3.08" height="3.08" fill="#5a5a5a"/>
<rect x="714.56" y="45.08" width="3.08" height="3.08" fill="#5a5a5a"/>
<rect x="720.72" y="45.08" width="3.08" height="3.08" fill="#5a5a5a"/>
<rect x="726.88" y="45.08" width="3.08" height="3.08" fill="#5a5a5a"/>
<rect x="711.48" y="48.16" width="3.08" height="3.08" fill="#5a5a5a"/>
<rect x="717.64" y="48.16" width="3.08" height="3.08" fill="#5a5a5a"/>
<rect x="723.80" y="48.16" width="3.08" height="3.08" fill="#5a5a5a"/>
<rect x="714.56" y="51.24" width="3.08" height="3.08" fill="#5a5a5a"/>
<rect x="720.72" y="51.24" width="3.08" height="3.08" fill="#5a5a5a"/>
<rect x="726.88" y="51.24" width="3.08" height="3.08" fill="#5a5a5a"/>
<rect x="711.48" y="54.32" width="3.08" height="3.08" fill="#5a5a5a"/>
<rect x="717.64" y="54.32" width="3.08" height="3.08" fill="#5a5a5a"/>
<rect x="723.80" y="54.32" width="3.08" height="3.08" fill="#5a5a5a"/>
<rect x="714.56" y="57.40" width="3.08" height="3.08" fill="#5a5a5a"/>
<rect x="720.72" y="57.40" width="3.08" height="3.08" fill="#5a5a5a"/>
<rect x="726.88" y="57.40" width="3.08" height="3.08" fill="#5a5a5a"/>
<rect x="711.48" y="60.5" width="18.6" height="3.4" fill="#000"/>
<rect x="730.20" y="42" width="18.6" height="18.5" fill="#ee8a9b"/>
<rect x="730.20" y="60.5" width="18.6" height="3.4" fill="#000"/>
<rect x="748.92" y="42" width="18.6" height="18.5" fill="#fdf6c3"/>
<rect x="748.92" y="60.5" width="18.6" height="3.4" fill="#000"/>
<rect x="767.64" y="42" width="18.6" height="18.5" fill="#b3e6a0"/>
<rect x="767.64" y="60.5" width="18.6" height="3.4" fill="#e8809a"/>
<rect x="637" y="42.4" width="17.8" height="17.8" fill="none" stroke="#e06070" stroke-width="0.8"/>
<rect x="636" y="64" width="154.8" height="6.7" fill="#434343"/>
<rect x="636" y="64.9" width="5" height="5" fill="#9c9c9c"/><text x="637.05" y="69.1" font-size="4.8" font-weight="bold" fill="#383838">H</text>
<rect x="654.6" y="64.9" width="5" height="5" fill="#9c9c9c"/><text x="655.65" y="69.1" font-size="4.8" font-weight="bold" fill="#383838">S</text>
<rect x="673.3" y="64.9" width="5" height="5" fill="#9c9c9c"/><text x="674.3499999999999" y="69.1" font-size="4.8" font-weight="bold" fill="#383838">V</text>
<path d="M640.2 77.2h4 M640.2 79.10000000000001h4 M640.2 81.0h4" stroke="#7c7c7c" stroke-width="0.55"/>
<rect x="649.3" y="75.7" width="32.8" height="9.2" fill="#444444"/>
<rect x="682.1" y="75.7" width="18" height="9.2" fill="#3a3a3a"/><rect x="700.5" y="75.7" width="18" height="9.2" fill="#3a3a3a"/>
<path d="M653.6 79 l3.6 -2 l3.6 2 v4 l-3.6 2 l-3.6 -2 z M653.6 79 l3.6 2 l3.6 -2 M653.6 81 l3.6 2 l3.6 -2" fill="none" stroke="#c8c8c8" stroke-width="0.7"/>
<text x="666" y="83.3" font-size="7.6" font-weight="bold" fill="#e8e8e8" textLength="14.2" lengthAdjust="spacingAndGlyphs">Capa</text>
<path d="M686 83 l4.5 -4 l4.5 4 M688 83 l2.5 -2 l2.5 2" fill="none" stroke="#666" stroke-width="0.7"/>
<rect x="704.5" y="78.2" width="9" height="5.6" fill="none" stroke="#666" stroke-width="0.7"/>
<rect x="636" y="84.8" width="154.8" height="49" fill="#424242"/>
<rect x="637.2" y="87.4" width="22.3" height="15" rx="1.5" fill="#4a4a4a" stroke="#575757" stroke-width="0.8"/>
<rect x="639.6" y="90.6" width="8.2" height="8.2" rx="1" fill="none" stroke="#9a9a9a" stroke-width="0.7"/>
<polyline points="651,93.6 653.5,96 656,93.6" fill="none" stroke="#b0b0b0" stroke-width="0.8"/>
<rect x="661.6" y="87.4" width="51.9" height="15" rx="1.5" fill="#4a4a4a" stroke="#575757" stroke-width="0.8"/>
<text x="673.5" y="97.6" font-size="7.3" fill="#d0d0d0" textLength="20" lengthAdjust="spacingAndGlyphs">Normal</text>
<polyline points="704,93.6 707,96.4 710,93.6" fill="none" stroke="#b0b0b0" stroke-width="0.8"/>
<rect x="717" y="90.2" width="50" height="6" fill="#eeeeee"/>
<rect x="717" y="90.2" width="50" height="6" fill="url(#smchk)" opacity="0.4"/>
<rect x="765.9" y="87.3" width="2.2" height="13.2" rx="1" fill="#8a8a8a"/>
<text x="772" y="95.8" font-size="7.2" fill="#d8d8d8" textLength="10.6" lengthAdjust="spacingAndGlyphs">100</text>
<path d="M784.2 92.2 l2 -1.8 l2 1.8 M784.2 96 l2 1.8 l2 -1.8" fill="none" stroke="#aaa" stroke-width="0.7"/>
<rect x="644.8" y="107.6" width="6.4" height="6.4" fill="#c4c4c4"/><rect x="647.4" y="105.4" width="6.4" height="6.4" fill="none" stroke="#c4c4c4" stroke-width="0.8"/>
<g transform="translate(665.8 109.8) scale(1.0)"><path d="M-4.3 -3.4 L-1.6 -2.6 M4.3 -3.4 L1.6 -2.6 M-4.3 0.2 L-1.6 -0.4 M4.3 0.2 L1.6 -0.4" stroke="#c4c4c4" stroke-width="0.8"/><circle cx="0" cy="-1.6" r="1.3" fill="none" stroke="#c4c4c4" stroke-width="0.8"/><path d="M-0.8 -4.6 H0.8 V-3.2 H-0.8 Z" fill="#c4c4c4"/><path d="M-0.9 -0.2 H0.9 L1.8 5 H-1.8 Z" fill="#c4c4c4"/></g>
<path d="M679 106 h3.4 v5 l1.6 1.2 v1.8 h-3 l-2 -2.4 z" fill="none" stroke="#c4c4c4" stroke-width="0.8"/><path d="M683.5 112.5 h3.5" stroke="#c4c4c4" stroke-width="0.8"/>
<rect x="696.2" y="109.2" width="6.4" height="4.6" rx="0.6" fill="#c4c4c4"/><path d="M697.6 109.4 v-1.6 a1.8 1.8 0 0 1 3.6 0 v1.6" fill="none" stroke="#c4c4c4" stroke-width="0.9"/>
<rect x="712.4" y="109.8" width="4.2" height="3.6" fill="#c4c4c4"/><path d="M713.1999999999999 110.0 v-1 a1.3 1.3 0 0 1 2.6 0 v1" fill="none" stroke="#c4c4c4" stroke-width="0.7"/><rect x="714.6" y="105.6" width="2" height="2" fill="#c4c4c4"/><rect x="718.4" y="105.6" width="2" height="2" fill="#c4c4c4"/><rect x="716.6" y="107.8" width="2" height="2" fill="#c4c4c4"/><rect x="718.8" y="110.6" width="2" height="2" fill="#c4c4c4"/>
<rect x="724.3" y="102.7" width="22.6" height="15" rx="1.6" fill="#4c4c4c" stroke="#5a5a5a" stroke-width="0.8"/>
<rect x="727.8" y="105.8" width="8.4" height="8.4" rx="1" fill="#c4c4c4"/><circle cx="731.4" cy="109.6" r="2.4" fill="#4c4c4c"/><circle cx="735.4" cy="113.6" r="2.2" fill="#4c4c4c" stroke="#c4c4c4" stroke-width="0.7"/>
<polyline points="739.6,108.8 742,111.2 744.4,108.8" fill="none" stroke="#c4c4c4" stroke-width="0.8"/>
<path d="M751 106.4 h7 v7 h-7 z M751 113.4 l7 -7" fill="none" stroke="#666" stroke-width="0.8"/><polyline points="760.6,108.8 763,111.2 765.4,108.8" fill="none" stroke="#666" stroke-width="0.8"/>
<rect x="769.4" y="102.7" width="21.4" height="15" rx="1.6" fill="#4c4c4c" stroke="#5a5a5a" stroke-width="0.8"/>
<rect x="774.2" y="108.4" width="6.6" height="6" fill="#f4f4f4"/><rect x="772" y="105.6" width="5.6" height="5.6" fill="#4a8ee8"/>
<polyline points="783.6,108.8 786,111.2 788.4,108.8" fill="none" stroke="#c4c4c4" stroke-width="0.8"/>
<rect x="639.8" y="121.2" width="9" height="9.6" rx="1.6" fill="none" stroke="#c4c4c4" stroke-width="0.9"/><line x1="639.8" y1="126" x2="648.8" y2="126" stroke="#c4c4c4" stroke-width="0.9"/>
<path d="M661 121.4 h8.6 v6 l-3.4 3.2 h-5.2 z" fill="none" stroke="#c4c4c4" stroke-width="0.9"/><circle cx="668.4" cy="129" r="2" fill="#424242" stroke="#c4c4c4" stroke-width="0.7"/>
<rect x="677.4" y="121.4" width="9" height="8.8" rx="1.2" fill="none" stroke="#c4c4c4" stroke-width="0.9"/><circle cx="681.6" cy="125.4" r="2" fill="none" stroke="#c4c4c4" stroke-width="0.7"/><circle cx="685.4" cy="129" r="2" fill="#424242" stroke="#c4c4c4" stroke-width="0.7"/>
<path d="M693.4 122 h3.6 l1 1 h5.4 v7 h-10 z" fill="#c4c4c4"/><circle cx="702" cy="129.2" r="2.2" fill="#424242" stroke="#c4c4c4" stroke-width="0.7"/>
<rect x="713.6" y="121.2" width="6.6" height="6.6" rx="1" fill="none" stroke="#c4c4c4" stroke-width="0.8"/><rect x="710.6" y="124.2" width="6.6" height="6.6" rx="1" fill="#424242" stroke="#c4c4c4" stroke-width="0.8"/><rect x="715.8" y="123" width="2.4" height="2.4" fill="#c4c4c4"/>
<rect x="730.6" y="121.2" width="6.6" height="6.6" rx="1" fill="none" stroke="#c4c4c4" stroke-width="0.8"/><rect x="727.4" y="124.2" width="6.6" height="6.6" rx="1" fill="#424242" stroke="#c4c4c4" stroke-width="0.8"/>
<rect x="745" y="121.6" width="8" height="8.6" rx="1.2" fill="#555" stroke="#5e5e5e" stroke-width="0.8"/><circle cx="749" cy="125.9" r="2.2" fill="#484848"/>
<rect x="761" y="121.6" width="10" height="8.8" rx="1" fill="none" stroke="#c4c4c4" stroke-width="0.8"/><rect x="765.6" y="123.4" width="5.6" height="6" rx="0.8" fill="#c4c4c4"/><circle cx="768.4" cy="126.4" r="1.4" fill="#424242"/><path d="M763 124.6v3.2" stroke="#c4c4c4" stroke-width="0.8"/>
<path d="M779.4 122.4 h6.6 M781.4 122.4 v-0.8 h2.6 v0.8 M780 123.4 l0.6 7.2 h4.2 l0.6 -7.2" fill="none" stroke="#8a8a8a" stroke-width="0.8"/>
<rect x="796" y="97.9" width="4" height="52.1" rx="2" fill="#5a5a5a"/>
<rect x="636" y="133.8" width="154.8" height="326" fill="url(#dots)"/>
<rect x="650.5" y="133.8" width="1.4" height="326" fill="#262626"/><rect x="664.2" y="133.8" width="1.4" height="326" fill="#262626"/>
<rect x="788.2" y="159" width="1.8" height="300" fill="#474747"/>
<line x1="675" y1="139.30" x2="788" y2="139.30" stroke="#262626" stroke-width="0.9"/>
<rect x="679.3" y="141.40" width="32.3" height="38.8" fill="url(#tchk)" stroke="#1e1e1e" stroke-width="0.8"/>
<text x="717" y="153.00" font-size="6.7" fill="#d4d4d4" textLength="38.3" lengthAdjust="spacingAndGlyphs">100 % Normal</text>
<text x="717" y="178.40" font-size="7" fill="#d8d8d8" textLength="46" lengthAdjust="spacingAndGlyphs">Capa 7 - copia 5</text>
<rect x="640.5" y="157.30" width="5.9" height="5.9" fill="none" stroke="#2a2a2a" stroke-width="0.8"/>
<rect x="780" y="159.50" width="3.5" height="4.7" fill="#2a2a2a"/>
<g transform="translate(657.5 159.70000000000002) scale(1.0)"><path d="M-4.3 -3.4 L-1.6 -2.6 M4.3 -3.4 L1.6 -2.6 M-4.3 0.2 L-1.6 -0.4 M4.3 0.2 L1.6 -0.4" stroke="#dcdcdc" stroke-width="0.8"/><circle cx="0" cy="-1.6" r="1.3" fill="none" stroke="#dcdcdc" stroke-width="0.8"/><path d="M-0.8 -4.6 H0.8 V-3.2 H-0.8 Z" fill="#dcdcdc"/><path d="M-0.9 -0.2 H0.9 L1.8 5 H-1.8 Z" fill="#dcdcdc"/></g>
<rect x="763.4" y="146.9" width="4.2" height="3.6" fill="#d0d0d0"/><path d="M764.1999999999999 147.10000000000002 v-1 a1.3 1.3 0 0 1 2.6 0 v1" fill="none" stroke="#d0d0d0" stroke-width="0.7"/><rect x="765.6" y="142.70000000000002" width="2" height="2" fill="#d0d0d0"/><rect x="769.4" y="142.70000000000002" width="2" height="2" fill="#d0d0d0"/><rect x="767.6" y="144.9" width="2" height="2" fill="#d0d0d0"/><rect x="769.8" y="147.70000000000002" width="2" height="2" fill="#d0d0d0"/>
<line x1="675" y1="182.90" x2="788" y2="182.90" stroke="#262626" stroke-width="0.9"/>
<rect x="679.3" y="185.00" width="32.3" height="38.8" fill="url(#tchk)" stroke="#1e1e1e" stroke-width="0.8"/>
<text x="717" y="196.60" font-size="6.7" fill="#d4d4d4" textLength="38.3" lengthAdjust="spacingAndGlyphs">100 % Normal</text>
<text x="717" y="222.00" font-size="7" fill="#d8d8d8" textLength="46" lengthAdjust="spacingAndGlyphs">Capa 7 - copia 4</text>
<rect x="640.5" y="200.90" width="5.9" height="5.9" fill="none" stroke="#2a2a2a" stroke-width="0.8"/>
<rect x="780" y="203.10" width="3.5" height="4.7" fill="#2a2a2a"/>
<g transform="translate(657.5 203.3) scale(1.0)"><path d="M-4.3 -3.4 L-1.6 -2.6 M4.3 -3.4 L1.6 -2.6 M-4.3 0.2 L-1.6 -0.4 M4.3 0.2 L1.6 -0.4" stroke="#dcdcdc" stroke-width="0.8"/><circle cx="0" cy="-1.6" r="1.3" fill="none" stroke="#dcdcdc" stroke-width="0.8"/><path d="M-0.8 -4.6 H0.8 V-3.2 H-0.8 Z" fill="#dcdcdc"/><path d="M-0.9 -0.2 H0.9 L1.8 5 H-1.8 Z" fill="#dcdcdc"/></g>
<rect x="763.4" y="190.5" width="4.2" height="3.6" fill="#d0d0d0"/><path d="M764.1999999999999 190.70000000000002 v-1 a1.3 1.3 0 0 1 2.6 0 v1" fill="none" stroke="#d0d0d0" stroke-width="0.7"/><rect x="765.6" y="186.3" width="2" height="2" fill="#d0d0d0"/><rect x="769.4" y="186.3" width="2" height="2" fill="#d0d0d0"/><rect x="767.6" y="188.5" width="2" height="2" fill="#d0d0d0"/><rect x="769.8" y="191.3" width="2" height="2" fill="#d0d0d0"/>
<line x1="675" y1="226.50" x2="788" y2="226.50" stroke="#262626" stroke-width="0.9"/>
<rect x="679.3" y="228.60" width="32.3" height="38.8" fill="url(#tchk)" stroke="#1e1e1e" stroke-width="0.8"/>
<text x="717" y="240.20" font-size="6.7" fill="#d4d4d4" textLength="38.3" lengthAdjust="spacingAndGlyphs">100 % Normal</text>
<text x="717" y="265.60" font-size="7" fill="#d8d8d8" textLength="46" lengthAdjust="spacingAndGlyphs">Capa 7 - copia 3</text>
<rect x="640.5" y="244.50" width="5.9" height="5.9" fill="none" stroke="#2a2a2a" stroke-width="0.8"/>
<rect x="780" y="246.70" width="3.5" height="4.7" fill="#2a2a2a"/>
<g transform="translate(657.5 246.9) scale(1.0)"><path d="M-4.3 -3.4 L-1.6 -2.6 M4.3 -3.4 L1.6 -2.6 M-4.3 0.2 L-1.6 -0.4 M4.3 0.2 L1.6 -0.4" stroke="#dcdcdc" stroke-width="0.8"/><circle cx="0" cy="-1.6" r="1.3" fill="none" stroke="#dcdcdc" stroke-width="0.8"/><path d="M-0.8 -4.6 H0.8 V-3.2 H-0.8 Z" fill="#dcdcdc"/><path d="M-0.9 -0.2 H0.9 L1.8 5 H-1.8 Z" fill="#dcdcdc"/></g>
<rect x="763.4" y="234.1" width="4.2" height="3.6" fill="#d0d0d0"/><path d="M764.1999999999999 234.3 v-1 a1.3 1.3 0 0 1 2.6 0 v1" fill="none" stroke="#d0d0d0" stroke-width="0.7"/><rect x="765.6" y="229.9" width="2" height="2" fill="#d0d0d0"/><rect x="769.4" y="229.9" width="2" height="2" fill="#d0d0d0"/><rect x="767.6" y="232.1" width="2" height="2" fill="#d0d0d0"/><rect x="769.8" y="234.9" width="2" height="2" fill="#d0d0d0"/>
<line x1="675" y1="270.10" x2="788" y2="270.10" stroke="#262626" stroke-width="0.9"/>
<rect x="679.3" y="272.20" width="32.3" height="38.8" fill="url(#tchk)" stroke="#1e1e1e" stroke-width="0.8"/>
<text x="717" y="283.80" font-size="6.7" fill="#d4d4d4" textLength="38.3" lengthAdjust="spacingAndGlyphs">100 % Normal</text>
<text x="717" y="309.20" font-size="7" fill="#d8d8d8" textLength="41.5" lengthAdjust="spacingAndGlyphs">Capa 7 - copia</text>
<rect x="640.5" y="288.10" width="5.9" height="5.9" fill="none" stroke="#2a2a2a" stroke-width="0.8"/>
<rect x="780" y="290.30" width="3.5" height="4.7" fill="#2a2a2a"/>
<g transform="translate(657.5 290.5) scale(1.0)"><path d="M-4.3 -3.4 L-1.6 -2.6 M4.3 -3.4 L1.6 -2.6 M-4.3 0.2 L-1.6 -0.4 M4.3 0.2 L1.6 -0.4" stroke="#dcdcdc" stroke-width="0.8"/><circle cx="0" cy="-1.6" r="1.3" fill="none" stroke="#dcdcdc" stroke-width="0.8"/><path d="M-0.8 -4.6 H0.8 V-3.2 H-0.8 Z" fill="#dcdcdc"/><path d="M-0.9 -0.2 H0.9 L1.8 5 H-1.8 Z" fill="#dcdcdc"/></g>
<rect x="763.4" y="277.7" width="4.2" height="3.6" fill="#d0d0d0"/><path d="M764.1999999999999 277.9 v-1 a1.3 1.3 0 0 1 2.6 0 v1" fill="none" stroke="#d0d0d0" stroke-width="0.7"/><rect x="765.6" y="273.5" width="2" height="2" fill="#d0d0d0"/><rect x="769.4" y="273.5" width="2" height="2" fill="#d0d0d0"/><rect x="767.6" y="275.7" width="2" height="2" fill="#d0d0d0"/><rect x="769.8" y="278.5" width="2" height="2" fill="#d0d0d0"/>
<line x1="675" y1="313.70" x2="788" y2="313.70" stroke="#262626" stroke-width="0.9"/>
<rect x="679.3" y="315.80" width="32.3" height="38.8" fill="url(#tchk)" stroke="#1e1e1e" stroke-width="0.8"/>
<text x="717" y="327.40" font-size="6.7" fill="#d4d4d4" textLength="38.3" lengthAdjust="spacingAndGlyphs">100 % Normal</text>
<text x="717" y="352.80" font-size="7" fill="#d8d8d8" textLength="46" lengthAdjust="spacingAndGlyphs">Capa 7 - copia 2</text>
<rect x="640.5" y="331.70" width="5.9" height="5.9" fill="none" stroke="#2a2a2a" stroke-width="0.8"/>
<rect x="780" y="333.90" width="3.5" height="4.7" fill="#2a2a2a"/>
<g transform="translate(657.5 334.1) scale(1.0)"><path d="M-4.3 -3.4 L-1.6 -2.6 M4.3 -3.4 L1.6 -2.6 M-4.3 0.2 L-1.6 -0.4 M4.3 0.2 L1.6 -0.4" stroke="#dcdcdc" stroke-width="0.8"/><circle cx="0" cy="-1.6" r="1.3" fill="none" stroke="#dcdcdc" stroke-width="0.8"/><path d="M-0.8 -4.6 H0.8 V-3.2 H-0.8 Z" fill="#dcdcdc"/><path d="M-0.9 -0.2 H0.9 L1.8 5 H-1.8 Z" fill="#dcdcdc"/></g>
<rect x="763.4" y="321.3" width="4.2" height="3.6" fill="#d0d0d0"/><path d="M764.1999999999999 321.5 v-1 a1.3 1.3 0 0 1 2.6 0 v1" fill="none" stroke="#d0d0d0" stroke-width="0.7"/><rect x="765.6" y="317.1" width="2" height="2" fill="#d0d0d0"/><rect x="769.4" y="317.1" width="2" height="2" fill="#d0d0d0"/><rect x="767.6" y="319.3" width="2" height="2" fill="#d0d0d0"/><rect x="769.8" y="322.1" width="2" height="2" fill="#d0d0d0"/>
<line x1="675" y1="357.30" x2="788" y2="357.30" stroke="#262626" stroke-width="0.9"/>
<rect x="679.3" y="359.40" width="32.3" height="38.8" fill="url(#tchk)" stroke="#1e1e1e" stroke-width="0.8"/>
<text x="717" y="371.00" font-size="6.7" fill="#d4d4d4" textLength="38.3" lengthAdjust="spacingAndGlyphs">100 % Normal</text>
<text x="717" y="396.40" font-size="7" fill="#d8d8d8" textLength="17.3" lengthAdjust="spacingAndGlyphs">Capa 7</text>
<rect x="640.5" y="375.30" width="5.9" height="5.9" fill="none" stroke="#2a2a2a" stroke-width="0.8"/>
<rect x="780" y="377.50" width="3.5" height="4.7" fill="#2a2a2a"/>
<g transform="translate(657.5 377.7) scale(1.0)"><path d="M-4.3 -3.4 L-1.6 -2.6 M4.3 -3.4 L1.6 -2.6 M-4.3 0.2 L-1.6 -0.4 M4.3 0.2 L1.6 -0.4" stroke="#dcdcdc" stroke-width="0.8"/><circle cx="0" cy="-1.6" r="1.3" fill="none" stroke="#dcdcdc" stroke-width="0.8"/><path d="M-0.8 -4.6 H0.8 V-3.2 H-0.8 Z" fill="#dcdcdc"/><path d="M-0.9 -0.2 H0.9 L1.8 5 H-1.8 Z" fill="#dcdcdc"/></g>
<rect x="763.4" y="364.9" width="4.2" height="3.6" fill="#d0d0d0"/><path d="M764.1999999999999 365.09999999999997 v-1 a1.3 1.3 0 0 1 2.6 0 v1" fill="none" stroke="#d0d0d0" stroke-width="0.7"/><rect x="765.6" y="360.7" width="2" height="2" fill="#d0d0d0"/><rect x="769.4" y="360.7" width="2" height="2" fill="#d0d0d0"/><rect x="767.6" y="362.9" width="2" height="2" fill="#d0d0d0"/><rect x="769.8" y="365.7" width="2" height="2" fill="#d0d0d0"/>
<rect x="665.8" y="400.6" width="122" height="43.5" fill="#5a6480"/>
<rect x="679.3" y="403.6" width="32.1" height="38.5" fill="#fde9b0" stroke="#2a2a2a" stroke-width="0.8"/>
<rect x="724.3" y="401.8" width="34.9" height="41.3" fill="#000" stroke="#dcdcdc" stroke-width="1"/>
<circle cx="741.6" cy="422.5" r="3" fill="#fff"/>
<path d="M638.8 422.2 C640.6 419.6 646.4 419.6 648.2 422.2 C646.4 424.4 640.6 424.4 638.8 422.2 Z" fill="none" stroke="#d8d8d8" stroke-width="0.8"/><circle cx="643.5" cy="422" r="1.5" fill="#e0e0e0"/>
<path d="M653.2 426.6 L660.6 419" stroke="#d4d4d4" stroke-width="1.3"/><line x1="653" y1="426.8" x2="662" y2="426.8" stroke="#d4d4d4" stroke-width="0.8"/>
<g stroke="#4aa0aa" stroke-width="0.7" fill="none"><circle cx="695.3" cy="422.6" r="2.2" stroke-dasharray="1 0.8"/></g><circle cx="695.3" cy="423.2" r="0.9" fill="#3a8a9a"/>
<polyline points="716.5,422 718.8,424.6 722.6,419.4" fill="none" stroke="#c0c6d8" stroke-width="0.9"/>
<text x="763" y="416" font-size="6.2" fill="#a4abc0">100</text><text x="763" y="443" font-size="6.2" fill="#a4abc0">Cap</text>
<path d="M779.5 420.6h4.2 M779.5 422.4h4.2 M779.5 424.2h4.2" stroke="#2a2a3a" stroke-width="0.8"/>
<rect x="679.3" y="447.3" width="32.1" height="20" fill="#56a5b0" stroke="#2a2a2a" stroke-width="0.8"/>
<rect x="724.3" y="446" width="33" height="20" fill="#000"/>
<text x="763" y="458" font-size="6.2" fill="#a0a0a0">100</text>
<circle cx="800.3" cy="381.2" r="14.6" fill="#333" stroke="#e0e0e0" stroke-width="1.1"/>
<polyline points="793.8,378 790.8,381.4 793.8,384.8" fill="none" stroke="#e0e0e0" stroke-width="1"/><rect x="796.4" y="373.5" width="6" height="16" fill="none" stroke="#e0e0e0" stroke-width="1"/>
</svg></body></html>
